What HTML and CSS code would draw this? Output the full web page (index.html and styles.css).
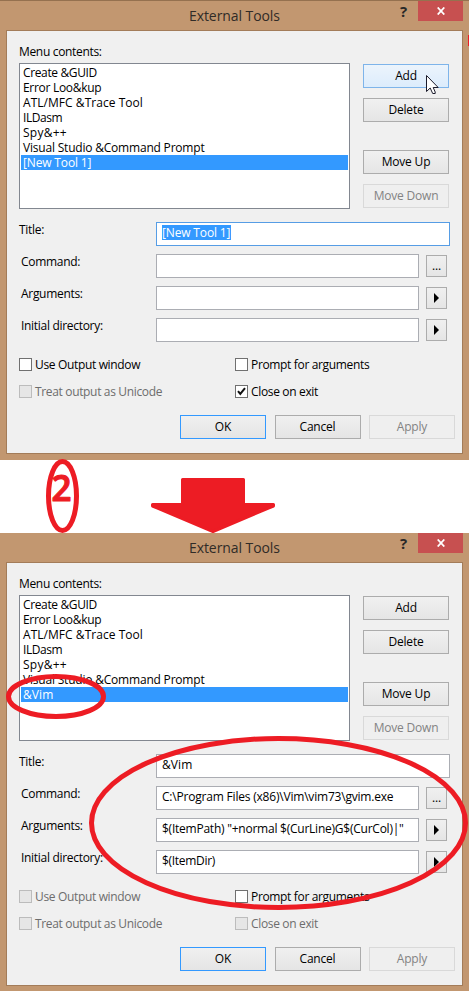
FILE: index.html
```html
<!DOCTYPE html>
<html lang="en">
<head>
<meta charset="utf-8">
<title>External Tools</title>
<link rel="stylesheet" href="styles.css">
</head>
<body>
<main class="page">
  <section class="window first">
    <header class="titlebar"><h1>External Tools</h1><span class="help">?</span><span class="close"><svg width="8" height="8" viewBox="0 0 8 8"><path d="M.7.5 7.3 7.5M7.3.5.7 7.5"/></svg></span></header>
    <div class="client">
      <div class="caption"><span class="t-menu">Menu contents:</span></div>
      <div class="top">
        <ul class="list">
          <li><span class="t-guid">Create &amp;GUID</span></li>
          <li><span class="t-look">Error Loo&amp;kup</span></li>
          <li><span class="t-atl">ATL/MFC &amp;Trace Tool</span></li>
          <li><span class="t-il">ILDasm</span></li>
          <li><span class="t-spy">Spy&amp;++</span></li>
          <li><span class="t-vs">Visual Studio &amp;Command Prompt</span></li>
          <li class="selected"><span class="t-new">[New Tool 1]</span></li>
        </ul>
        <div class="side"><button class="hot">Add</button><button>Delete</button><button class="up">Move Up</button><button disabled>Move Down</button></div>
      </div>
      <div class="fields">
        <div class="row"><label class="title-label">Title:</label><div class="input wide focus"><mark class="t-new">[New Tool 1]</mark></div></div>
        <div class="row"><label>Command:</label><div class="input"></div><button class="small dots">...</button></div>
        <div class="row"><label>Arguments:</label><div class="input"></div><button class="small"><i class="tri"></i></button></div>
        <div class="row"><label>Initial directory:</label><div class="input"></div><button class="small"><i class="tri"></i></button></div>
      </div>
      <div class="checks">
        <div class="check"><i class="box"></i><span>Use Output window</span></div>
        <div class="check"><i class="box"></i><span>Prompt for arguments</span></div>
        <div class="check off"><i class="box"></i><span>Treat output as Unicode</span></div>
        <div class="check"><i class="box"><svg width="11" height="11" viewBox="0 0 11 11"><path d="M2 5.2 4.3 8 9 2.2"/></svg></i><span>Close on exit</span></div>
      </div>
      <footer><button class="default">OK</button><button>Cancel</button><button disabled>Apply</button></footer>
    </div>
  </section>
  <div class="gap"></div>
  <section class="window second">
    <header class="titlebar"><h1>External Tools</h1><span class="help">?</span><span class="close"><svg width="8" height="8" viewBox="0 0 8 8"><path d="M.7.5 7.3 7.5M7.3.5.7 7.5"/></svg></span></header>
    <div class="client">
      <div class="caption"><span class="t-menu">Menu contents:</span></div>
      <div class="top">
        <ul class="list">
          <li><span class="t-guid">Create &amp;GUID</span></li>
          <li><span class="t-look">Error Loo&amp;kup</span></li>
          <li><span class="t-atl">ATL/MFC &amp;Trace Tool</span></li>
          <li><span class="t-il">ILDasm</span></li>
          <li><span class="t-spy">Spy&amp;++</span></li>
          <li><span class="t-vs">Visual Studio &amp;Command Prompt</span></li>
          <li class="selected"><span class="t-vim">&amp;Vim</span></li>
        </ul>
        <div class="side"><button>Add</button><button>Delete</button><button class="up">Move Up</button><button disabled>Move Down</button></div>
      </div>
      <div class="fields">
        <div class="row"><label class="title-label">Title:</label><div class="input wide"><span class="t-vim">&amp;Vim</span></div></div>
        <div class="row"><label>Command:</label><div class="input"><span class="t-path">C:\Program Files (x86)\Vim\vim73\gvim.exe</span></div><button class="small dots">...</button></div>
        <div class="row"><label>Arguments:</label><div class="input"><span class="t-args">$(ItemPath) "+normal $(CurLine)G$(CurCol)|"</span></div><button class="small"><i class="tri"></i></button></div>
        <div class="row"><label>Initial directory:</label><div class="input"><span class="t-dir">$(ItemDir)</span></div><button class="small"><i class="tri"></i></button></div>
      </div>
      <div class="checks">
        <div class="check off"><i class="box"></i><span>Use Output window</span></div>
        <div class="check"><i class="box"></i><span>Prompt for arguments</span></div>
        <div class="check off"><i class="box"></i><span>Treat output as Unicode</span></div>
        <div class="check off"><i class="box"></i><span>Close on exit</span></div>
      </div>
      <footer><button class="default">OK</button><button>Cancel</button><button disabled>Apply</button></footer>
    </div>
  </section>
  <svg class="marks" width="469" height="991" viewBox="0 0 469 991">
    <g class="ring">
      <ellipse cx="62.5" cy="496" rx="14" ry="34.5"/>
      <ellipse cx="56" cy="696.5" rx="47.5" ry="20"/>
      <ellipse cx="278.5" cy="823" rx="187" ry="84.5"/>
    </g>
    <path class="arrow" d="M182.5 479.5H243.500V504.500H273.500V506L213 531.500 152.500 506V504.500H182.500Z"/>
    <rect class="red" x="468" y="35" width="1" height="11"/>
    <text class="two" x="51.5" y="500.5" textLength="20" lengthAdjust="spacingAndGlyphs">2</text>
    <path class="cursor" d="M426.500 75.500V91.500L430.200 88 432.700 93.500H435.200V92L433.200 87.500H438.200Z"/>
  </svg>
</main>
</body>
</html>
```
FILE: styles.css
```css
* { box-sizing: border-box; }
body { margin: 0; background: #fff; }
.page { position: relative; width: 469px; height: 991px; overflow: hidden; font: 12px/15px "Open Sans", "Noto Sans", sans-serif; color: #000; letter-spacing: -.2px; }
.window { background: #c29770; display: flex; flex-direction: column; padding: 0 6px; }
.first { height: 460px; border-top: 1px solid #95714f; }
.second { height: 458px; }
.gap { height: 73px; }
.titlebar { display: flex; height: 29px; flex: none; }
.titlebar h1 { margin: 0; flex: 1; padding-left: 183px; font-size: 14px; font-weight: 400; line-height: 29px; letter-spacing: -.08px; color: #302b27; white-space: nowrap; }
.help { width: 28px; padding-left: 1px; margin-right: 1px; text-align: center; font-size: 15px; font-weight: 700; line-height: 21px; color: #282828; }
.close { width: 45px; height: 20px; background: #c75050; display: grid; place-items: center; }
.close path { stroke: #fff; stroke-width: 1.8; fill: none; }
.client { width: 457px; height: 424px; border: 1px solid #a37c59; background: #f0f0f0; }
.caption { height: 32px; padding: 13px 0 0 12px; }
.top { display: flex; gap: 13px; padding-left: 12px; }
.list { width: 331px; height: 146px; margin: 0; padding: 1px; list-style: none; background: #fff; border: 1px solid #828790; }
.list li { height: 15px; padding-left: 2px; line-height: 16px; white-space: nowrap; }
.t-menu { letter-spacing: -.33px; }
.t-guid { letter-spacing: -.36px; }
.t-look { letter-spacing: -.3px; }
.t-atl { letter-spacing: .04px; }
.t-il { letter-spacing: -.45px; }
.t-spy { letter-spacing: .25px; }
.t-vim { letter-spacing: .1px; }
.t-args { letter-spacing: -.24px; }
.t-dir { letter-spacing: -.3px; }
.t-new { letter-spacing: -.15px; }
.selected { background: #39f; color: #fff; }
.side { display: flex; flex-direction: column; gap: 10px; padding-top: 1px; }
.side .up { margin-top: 18px; }
button { width: 86px; height: 24px; margin: 0; padding: 0; border: 1px solid #acacac; background: linear-gradient(#f0f0f0, #e5e5e5); color: #000; font: inherit; letter-spacing: inherit; line-height: 22px; text-align: center; }
button:disabled { border-color: #d9d9d9; background: #efefef; color: #838383; }
.hot { border-color: #7eb4ea; background: linear-gradient(#ecf4fc, #dcecfc); }
.default { border-color: #39f; }
.fields { padding: 13px 0 0 12px; display: flex; flex-direction: column; gap: 8px; }
.row { display: flex; height: 24px; }
.row label { width: 137px; padding-left: 2px; letter-spacing: -.3px; }
.row .title-label { padding-left: 0; }
.input { width: 263px; height: 24px; border: 1px solid #abadb3; background: #fff; padding: 2px 5px; line-height: 16px; white-space: nowrap; }
.wide { width: 294px; }
.focus { border-color: #569de5; }
mark { display: block; width: 69px; height: 15px; line-height: 15px; background: #39f; color: #fff; }
.small { width: 21px; height: 22px; margin: 1px 0 0 7px; display: flex; align-items: center; justify-content: center; line-height: 18px; }
.tri { border-left: 5px solid #000; border-top: 5px solid transparent; border-bottom: 5px solid transparent; margin-right: 1px; }
.checks { display: grid; grid-template-columns: 216px 1fr; grid-auto-rows: 13px; row-gap: 14px; padding: 16px 0 0 12px; }
.check { display: flex; gap: 3px; line-height: 14px; white-space: nowrap; letter-spacing: -.34px; }
.box { width: 13px; height: 13px; border: 1px solid #707070; background: #fff; display: block; }
.box svg { display: block; }
.box path { fill: none; stroke: #111; stroke-width: 2; }
.off { color: #6d6d6d; }
.off .box { border-color: #bcbcbc; background: #e6e6e6; }
footer { display: flex; padding: 17px 0 0 173px; gap: 8.500px; }
.marks { position: absolute; left: 0; top: 0; }
.ring { fill: none; stroke: #ed1c24; stroke-width: 5; }
.arrow { fill: #ed1c24; stroke: #ed1c24; stroke-width: 3; stroke-linejoin: round; }
.red { fill: #ed1c24; }
.two { font: 600 36px "Open Sans", sans-serif; letter-spacing: 0; fill: #ed1c24; stroke: #ed1c24; stroke-width: 1.2; stroke-linejoin: round; }
.cursor { fill: #fff; stroke: #1c1c2c; stroke-width: 1; }
```
